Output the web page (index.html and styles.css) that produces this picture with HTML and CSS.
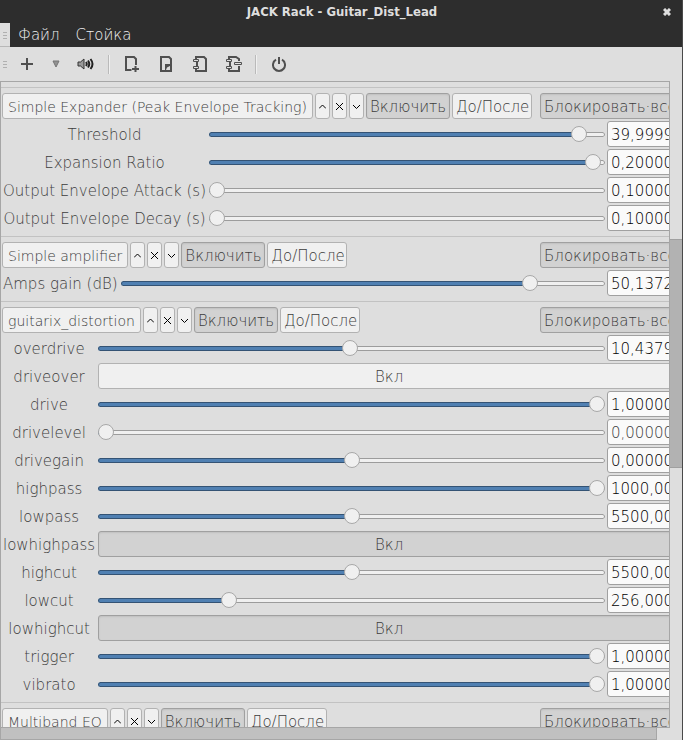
FILE: index.html
```html
<!DOCTYPE html>
<html lang="ru">
<head>
<meta charset="utf-8">
<title>JACK Rack - Guitar_Dist_Lead</title>
<link rel="stylesheet" href="styles.css">
</head>
<body>
<svg class="defs" aria-hidden="true">
  <symbol id="up" viewBox="0 0 7 7"><path d="M0 5.5L3.5 2L7 5.5"/></symbol>
  <symbol id="x" viewBox="0 0 7 7"><path d="M0 0L7 7M7 0L0 7"/></symbol>
  <symbol id="down" viewBox="0 0 7 7"><path d="M0 2L3.5 5.5L7 2"/></symbol>
</svg>
<header class="titlebar">
  <h1>JACK Rack - Guitar_Dist_Lead</h1>
  <button class="close" aria-label="Закрыть"><svg width="8" height="8" viewBox="0 0 8 8"><path d="M1 1L7 7M7 1L1 7"/></svg></button>
</header>
<nav class="menubar">
  <span class="grip"></span>
  <button>Файл</button>
  <button>Стойка</button>
</nav>
<div class="toolbar">
  <span class="grip"></span>
  <button class="tool" aria-label="Добавить"><svg width="12" height="12" viewBox="0 0 12 12"><path d="M6 0V12M0 6H12"/></svg></button>
  <button class="tool narrow" aria-label="Список"><svg width="8" height="8" viewBox="0 0 8 8"><path class="tri" d="M1 1H7L4 7Z"/></svg></button>
  <button class="tool speakers" aria-label="Каналы"><svg width="18" height="12" viewBox="0 0 18 12"><path class="speaker" d="M1 4H3.5L7 1V11L3.5 8H1Z"/><path class="wave" d="M9 4Q10.500 6 9 8M11 2.500Q13.500 6 11 9.500M13.500 1Q17.500 6 13.500 11"/></svg></button>
  <span class="sep"></span>
  <button class="tool" aria-label="Создать"><svg width="14" height="16" viewBox="0 0 14 16"><path d="M6.500 14H1V1H9L11 3V9M7 13H14M10.500 10V16"/></svg></button>
  <button class="tool" aria-label="Открыть"><svg width="12" height="16" viewBox="0 0 12 16"><path d="M1 1H9L11 3V15H1Z"/><path class="fill" d="M5 8H11V9L6 15H5Z"/><path class="paper" d="M7 11.500L10 10V14H6Z"/></svg></button>
  <button class="tool" aria-label="Сохранить"><svg width="15" height="16" viewBox="0 0 15 16"><path d="M3 3V1H11L13 3V15H3V13M4 5V11"/><path class="pin" d="M.5 3.500H5.500V5.500H.5ZM.5 10.500H5.500V12.500H.5Z"/></svg></button>
  <button class="tool" aria-label="Сохранить как"><svg width="16" height="16" viewBox="0 0 16 16"><path d="M3 3V1H10L13 3V5M13 10V15H3V13M4 5V11"/><path class="pin" d="M.5 3.500H5.500V5.500H.5ZM.5 10.500H5.500V12.500H.5ZM8.500 6.500H15.500V8.500H8.500Z"/></svg></button>
  <span class="sep"></span>
  <button class="tool" aria-label="Выход"><svg width="14" height="15" viewBox="0 0 14 15"><path d="M4 2.700A6 6 0 1 0 10 2.700M7 0V7"/></svg></button>
</div>
<main class="rack">
  <div class="viewport">
    <div class="content">
      <section class="plugin">
        <div class="head">
          <button class="name">Simple Expander (Peak Envelope Tracking)</button>
          <button class="mini" aria-label="Вверх"><svg><use href="#up"/></svg></button>
          <button class="mini" aria-label="Удалить"><svg><use href="#x"/></svg></button>
          <button class="mini" aria-label="Вниз"><svg><use href="#down"/></svg></button>
          <button class="on enable">Включить</button>
          <button class="wet">До/После</button>
          <button class="on lock">Блокировать·все</button>
        </div>
        <div class="params">
          <label for="a1">Threshold</label><input type="range" id="a1" min="0" max="1" step="any" value="0.953" style="--v:0.953"><input type="text" aria-label="Threshold" value="39,99990">
          <label for="a2">Expansion Ratio</label><input type="range" id="a2" min="0" max="1" step="any" value="0.99" style="--v:0.99"><input type="text" aria-label="Expansion Ratio" value="0,200000">
          <label for="a3">Output Envelope Attack (s)</label><input type="range" id="a3" min="0" max="1" step="any" value="0" style="--v:0"><input type="text" aria-label="Output Envelope Attack" value="0,100000">
          <label for="a4">Output Envelope Decay (s)</label><input type="range" id="a4" min="0" max="1" step="any" value="0" style="--v:0"><input type="text" aria-label="Output Envelope Decay" value="0,100000">
        </div>
      </section>
      <section class="plugin">
        <div class="head">
          <button class="name">Simple amplifier</button>
          <button class="mini" aria-label="Вверх"><svg><use href="#up"/></svg></button>
          <button class="mini" aria-label="Удалить"><svg><use href="#x"/></svg></button>
          <button class="mini" aria-label="Вниз"><svg><use href="#down"/></svg></button>
          <button class="on enable">Включить</button>
          <button class="wet">До/После</button>
          <button class="on lock">Блокировать·все</button>
        </div>
        <div class="params">
          <label for="b1">Amps gain (dB)</label><input type="range" id="b1" min="0" max="1" step="any" value="0.857" style="--v:0.857"><input type="text" aria-label="Amps gain" value="50,13720">
        </div>
      </section>
      <section class="plugin">
        <div class="head">
          <button class="name">guitarix_distortion</button>
          <button class="mini" aria-label="Вверх"><svg><use href="#up"/></svg></button>
          <button class="mini" aria-label="Удалить"><svg><use href="#x"/></svg></button>
          <button class="mini" aria-label="Вниз"><svg><use href="#down"/></svg></button>
          <button class="on enable">Включить</button>
          <button class="wet">До/После</button>
          <button class="on lock">Блокировать·все</button>
        </div>
        <div class="params">
          <label for="c1">overdrive</label><input type="range" id="c1" min="0" max="1" step="any" value="0.496" style="--v:0.496"><input type="text" aria-label="overdrive" value="10,43790">
          <label for="c2">driveover</label><button id="c2" class="wide">Вкл</button>
          <label for="c3">drive</label><input type="range" id="c3" min="0" max="1" step="any" value="1" style="--v:1"><input type="text" aria-label="drive" value="1,000000">
          <label for="c4">drivelevel</label><input type="range" id="c4" min="0" max="1" step="any" value="0" style="--v:0"><input type="text" class="dim" aria-label="drivelevel" value="0,000000">
          <label for="c5">drivegain</label><input type="range" id="c5" min="0" max="1" step="any" value="0.5" style="--v:0.5"><input type="text" aria-label="drivegain" value="0,000000">
          <label for="c6">highpass</label><input type="range" id="c6" min="0" max="1" step="any" value="1" style="--v:1"><input type="text" aria-label="highpass" value="1000,000">
          <label for="c7">lowpass</label><input type="range" id="c7" min="0" max="1" step="any" value="0.5" style="--v:0.5"><input type="text" aria-label="lowpass" value="5500,000">
          <label for="c8">lowhighpass</label><button id="c8" class="wide on">Вкл</button>
          <label for="c9">highcut</label><input type="range" id="c9" min="0" max="1" step="any" value="0.5" style="--v:0.5"><input type="text" aria-label="highcut" value="5500,000">
          <label for="c10">lowcut</label><input type="range" id="c10" min="0" max="1" step="any" value="0.25" style="--v:0.25"><input type="text" aria-label="lowcut" value="256,0000">
          <label for="c11">lowhighcut</label><button id="c11" class="wide on">Вкл</button>
          <label for="c12">trigger</label><input type="range" id="c12" min="0" max="1" step="any" value="1" style="--v:1"><input type="text" aria-label="trigger" value="1,000000">
          <label for="c13">vibrato</label><input type="range" id="c13" min="0" max="1" step="any" value="1" style="--v:1"><input type="text" aria-label="vibrato" value="1,000000">
        </div>
      </section>
      <section class="plugin">
        <div class="head">
          <button class="name">Multiband EQ</button>
          <button class="mini" aria-label="Вверх"><svg><use href="#up"/></svg></button>
          <button class="mini" aria-label="Удалить"><svg><use href="#x"/></svg></button>
          <button class="mini" aria-label="Вниз"><svg><use href="#down"/></svg></button>
          <button class="on enable">Включить</button>
          <button class="wet">До/После</button>
          <button class="on lock">Блокировать·все</button>
        </div>
      </section>
    </div>
  </div>
  <div class="vbar"><div class="vthumb"></div></div>
  <div class="hbar"><div class="hthumb"></div></div>
</main>
</body>
</html>
```
FILE: styles.css
```css
* { box-sizing: border-box; }
body {
  margin: 0;
  height: 100vh;
  display: flex;
  flex-direction: column;
  overflow: hidden;
  background: #dedede;
  border-right: 1px solid #4a4a4a;
  color: #3c3c3c;
  font: 200 15px/20px "DejaVu Sans Light", "DejaVu Sans", sans-serif;
}
button, input { font: inherit; color: inherit; margin: 0; }
button { padding: 0; border: 0; background: none; white-space: nowrap; }
svg { display: block; fill: none; stroke: #505050; stroke-width: 2; }
.defs { position: absolute; width: 0; height: 0; }

.titlebar {
  display: grid;
  grid-template-columns: 32px 1fr 30px;
  align-items: center;
  height: 23px;
  flex: none;
  background: #2d2d2d;
}
.titlebar h1 {
  grid-column: 2;
  margin: 0;
  text-align: center;
  font: bold 13px/23px "DejaVu Sans Condensed", "DejaVu Sans", sans-serif;
  color: #dedede;
}
.close svg { stroke: #dedede; stroke-width: 3; margin: 0 auto; }

.menubar { display: flex; height: 24px; flex: none; background: #2d2d2d; color: #f0f0f0; }
.menubar button { padding: 0 8px; }
.grip {
  width: 10px;
  flex: none;
  background: linear-gradient(#b0b0b0 1px, transparent 1px) 3px 9px / 4px 4px no-repeat,
    linear-gradient(#b0b0b0 1px, transparent 1px) 3px 12px / 4px 4px no-repeat,
    linear-gradient(#b0b0b0 1px, transparent 1px) 3px 15px / 4px 4px no-repeat, #dedede;
}
.menubar .grip { border-bottom: 1px solid #b8b8b8; }

.toolbar { display: flex; align-items: center; height: 34px; flex: none; }
.toolbar .grip { height: 24px; }
.tool { display: grid; place-items: center; width: 34px; height: 30px; }
.tool.narrow { width: 24px; }
.tool.speakers { width: 36px; }
.sep { width: 2px; height: 19px; margin: 0 5px 0 4px; background: linear-gradient(90deg, #bababa 50%, #f0f0f0 50%); }
.tri { fill: #929292; stroke: #757575; stroke-width: 1; }
.speaker { fill: #999; stroke: #333; stroke-width: 1; }
.wave { stroke: #222; }
.fill { fill: #505050; stroke: none; }
.paper { fill: #dedede; stroke: none; }
.pin { fill: #dedede; stroke-width: 1; }

.rack { flex: 1; min-height: 0; display: grid; grid-template: minmax(0, 1fr) 12px / minmax(0, 1fr) 12px; }
.viewport { overflow: hidden; border: 1px solid #a6a6a6; }
.content { width: calc(100% + 12px); }
.plugin { padding: 5px 1px 0; }
.plugin + .plugin { margin-top: 5px; padding-top: 0; }
.plugin::before { content: ""; display: block; height: 1px; margin: 0 -1px 5px; background: #c2c2c2; }
.head { display: flex; gap: 2px; margin-bottom: 2px; }
.head button, .wide {
  flex: none;
  height: 26px;
  padding: 1px 3px 0;
  border: 1px solid #b2b2b2;
  border-radius: 3px;
  background: #f0f0f0;
}
.head .name { padding: 1px 5px 0; font-size: 14px; }
.head .mini { display: grid; place-items: center; width: 15px; padding: 0; }
.mini svg { width: 7px; height: 7px; stroke: #000; stroke-width: 1; }
.head .on, .wide.on { background: #d2d2d2; border-color: #a0a0a0; box-shadow: inset 0 1px 2px #c0c0c0; }
.head .enable { width: 84px; }
.head .wet { width: 80px; }
.head .lock { width: 140px; margin-left: auto; text-align: left; }
.params { display: grid; grid-template-columns: auto minmax(0, 1fr) 73px; grid-auto-rows: 26px; gap: 2px; }
.params label { padding: 0 1px; text-align: center; line-height: 28px; white-space: nowrap; }
.wide { grid-column: 2 / 4; }
input[type="text"] {
  min-width: 0;
  width: 100%;
  padding: 1px 3px 0;
  border: 1px solid #a0a0a0;
  border-radius: 3px;
  background: #fafafa;
  color: #000;
}
input[type="text"].dim { color: #404040; }
input[type="range"] { -webkit-appearance: none; appearance: none; width: 100%; height: 26px; background: none; }
input[type="range"]::-webkit-slider-runnable-track {
  height: 5px;
  border-radius: 3px;
  background: linear-gradient(#5080b2, #5080b2) 0 0 / calc(8px + (100% - 16px) * var(--v)) 100% no-repeat #f0f0f0;
  box-shadow: inset 0 0 0 1px rgba(0, 0, 0, 0.35);
}
input[type="range"]::-webkit-slider-thumb {
  -webkit-appearance: none;
  width: 16px;
  height: 16px;
  margin-top: -6px;
  border: 1px solid #a8a8a8;
  border-radius: 50%;
  background: #f0f0f0;
}
.vbar { display: flex; flex-direction: column; }
.vbar::before { content: ""; flex: 158; }
.vbar::after { content: ""; flex: 261; }
.vthumb { flex: 228; background: #b2b2b2; border: 1px solid #a0a0a0; border-width: 1px 0; }
.hbar { display: flex; }
.hthumb { width: 98%; background: #c0c0c0; border: 1px solid #a6a6a6; border-top: 0; }
```
